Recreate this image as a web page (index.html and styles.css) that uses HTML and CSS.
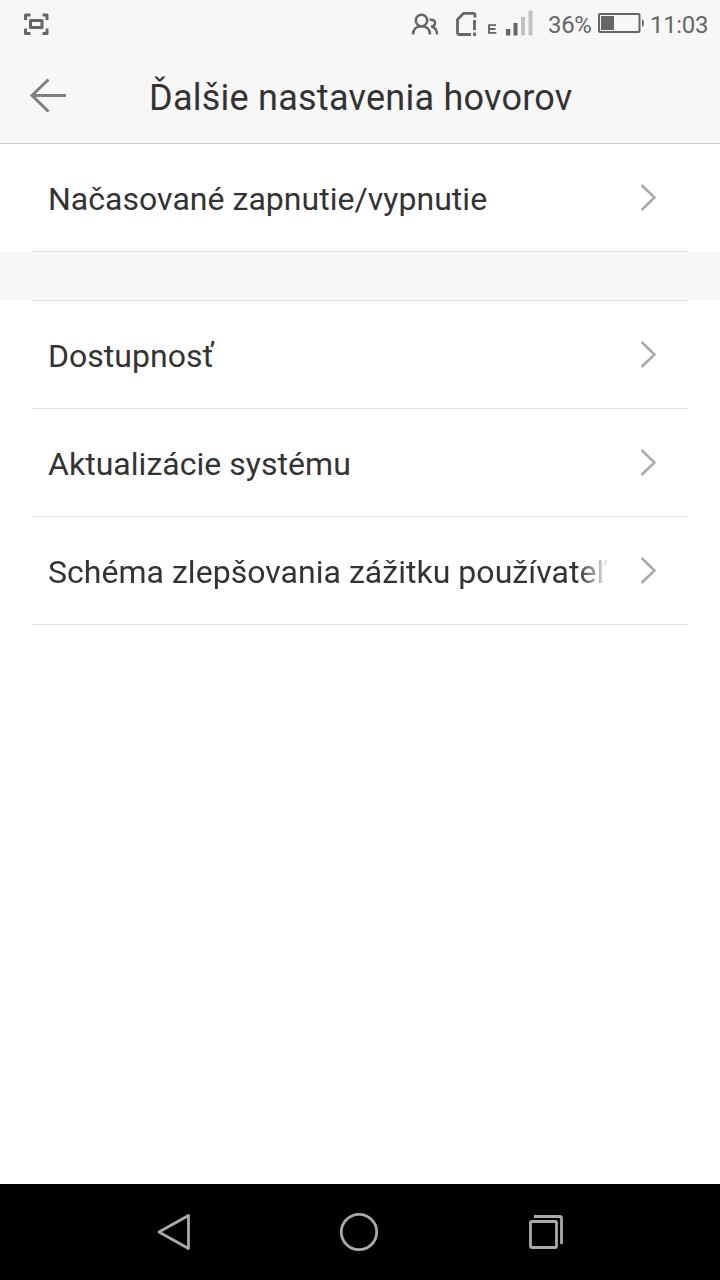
FILE: index.html
```html
<!DOCTYPE html>
<html lang="sk">
<head>
<meta charset="utf-8">
<title>Ďalšie nastavenia hovorov</title>
<link rel="stylesheet" href="styles.css">
</head>
<body>
<div class="screen">
  <div class="status">
    <svg class="shot" width="26" height="22" viewBox="0 0 26 22" fill="none" stroke="#666" stroke-width="3" stroke-linejoin="round">
      <path d="M1.500 7v-5h5M18.500 2h4.500v5M23 15.500v5h-4.500M6.500 20.500h-5v-5"/><path d="M6.500 7.500h11.500v7h-11.500z"/>
    </svg>
    <svg class="signals" width="126" height="30" viewBox="410 9 126 30" fill="none" stroke="#666" stroke-width="2.500">
      <circle cx="421.500" cy="20.500" r="5.700"/>
      <path d="M413 34.500c0-5 3.200-8.300 8.500-8.300s8.500 3.300 8.500 8.300M429.500 19.800c4-.8 6 1.500 5.500 4-.3 1.600-1.700 2.600-4 2.800M431.500 26.500c3.500 1 5.500 4 5.500 8"/>
      <path stroke-width="2.800" d="M471 34.500h-11.500q-2 0-2-2V19.500l6-6.200h9.500q2 0 2 2v2.200M474.500 20v10M474.500 32.500v3.500"/>
      <path stroke-width="1.900" d="M496 25.100h-7v7.800h7.300M489 29h6.500"/>
      <g stroke="none"><path fill="#666" d="M506 29h4.300v6.500h-4.300zM513.500 23h4v12.500h-4z"/><path fill="#c2c2c2" d="M521 17h4v18.500h-4zM528.500 10.500h4v25h-4z"/></g>
    </svg>
    <span class="percent">36%</span>
    <svg class="battery" width="48" height="22" viewBox="597 12 48 22">
      <rect x="599" y="14" width="40.500" height="18" rx="1" fill="none" stroke="#666" stroke-width="2"/>
      <path fill="#666" d="M601 16h13v14h-13zM642 19q2 1 2 4t-2 4z"/>
    </svg>
    <span class="clock">11:03</span>
  </div>
  <header class="header">
    <svg class="back" width="38" height="36" viewBox="29 78 38 36" fill="none" stroke="#808080" stroke-width="3"><path d="M66 95.500H32M48.500 79.500l-16.500 16 16.500 16"/></svg>
    <h1 class="title">Ďalšie nastavenia hovorov</h1>
  </header>
  <main class="content">
    <section class="group">
      <div class="row"><span class="label">Načasované zapnutie/vypnutie</span><svg class="chevron" width="17" height="28" viewBox="0 0 17 28"><path d="M1.500 2 14.500 14.500 1.500 27"/></svg></div>
    </section>
    <div class="gap"></div>
    <section class="group lined">
      <div class="row"><span class="label">Dostupnosť</span><svg class="chevron" width="17" height="28" viewBox="0 0 17 28"><path d="M1.500 2 14.500 14.500 1.500 27"/></svg></div>
      <div class="row"><span class="label">Aktualizácie systému</span><svg class="chevron" width="17" height="28" viewBox="0 0 17 28"><path d="M1.500 2 14.500 14.500 1.500 27"/></svg></div>
      <div class="row"><span class="label fade">Schéma zlepšovania zážitku používateľ</span><svg class="chevron" width="17" height="28" viewBox="0 0 17 28"><path d="M1.500 2 14.500 14.500 1.500 27"/></svg></div>
    </section>
  </main>
  <nav class="nav">
    <svg width="34" height="40" viewBox="157 1212 34 40"><path d="M188.500 1215.500v33L159 1232z"/></svg>
    <svg width="40" height="40" viewBox="339 1212 40 40"><circle cx="359" cy="1232" r="17.700"/></svg>
    <svg width="36" height="40" viewBox="528 1212 36 40"><rect x="530.500" y="1221.500" width="26" height="26" rx="1"/><path d="M534 1216.500h26q1.500 0 1.500 1.500v26"/></svg>
  </nav>
</div>
</body>
</html>
```
FILE: styles.css
```css
* { box-sizing: border-box; }
body { margin: 0; font-family: Roboto, sans-serif; color: #333; }
.screen { width: 720px; height: 1280px; display: flex; flex-direction: column; background: #fff; overflow: hidden; }
svg { display: block; flex: none; }
.status { height: 48px; flex: none; display: flex; align-items: flex-start; padding-left: 24px; background: #f7f7f7; color: #666; font-size: 24px; line-height: 30px; letter-spacing: -0.35px; white-space: nowrap; }
.shot { margin-top: 13px; }
.signals { margin: 9px 0 0 360px; }
.percent { width: 49px; margin: 10px 0 0 12px; }
.battery { margin-top: 12px; }
.clock { margin: 10px 0 0 5px; }
.header { height: 96px; flex: none; display: flex; align-items: flex-start; padding-left: 29px; background: #f7f7f7; border-bottom: 1px solid #ccc; }
.back { margin-top: 30px; }
.title { margin: 29px 0 0 82px; font-size: 36px; line-height: 42px; font-weight: 400; letter-spacing: 0.25px; white-space: nowrap; }
.content { flex: 1; }
.group { padding: 0 32px; }
.row { height: 108px; display: flex; align-items: center; justify-content: space-between; padding: 0 31px 0 16px; border-bottom: 1px solid #e0e0e0; }
.label { width: 560px; padding-top: 3px; font-size: 32px; line-height: 40px; letter-spacing: 0.03px; white-space: nowrap; }
.fade { mask-image: linear-gradient(to right, #000 530px, rgba(0, 0, 0, 0.3) 552px, transparent 562px); }
.gap { height: 48px; background: #f7f7f7; }
.lined::before { content: ""; display: block; height: 1px; margin-bottom: -1px; background: #e0e0e0; }
.lined .row:first-of-type { height: 109px; padding-top: 1px; }
.chevron { margin-bottom: 1px; fill: none; stroke: #aaa; stroke-width: 2.5px; }
.nav { height: 96px; flex: none; display: flex; align-items: flex-start; padding: 28px 0 0 157px; background: #000; }
.nav svg { fill: none; stroke: #aaa; stroke-width: 2.8px; stroke-linejoin: round; }
.nav svg:nth-child(2) { margin-left: 148px; }
.nav svg:nth-child(3) { margin-left: 149px; }
```
